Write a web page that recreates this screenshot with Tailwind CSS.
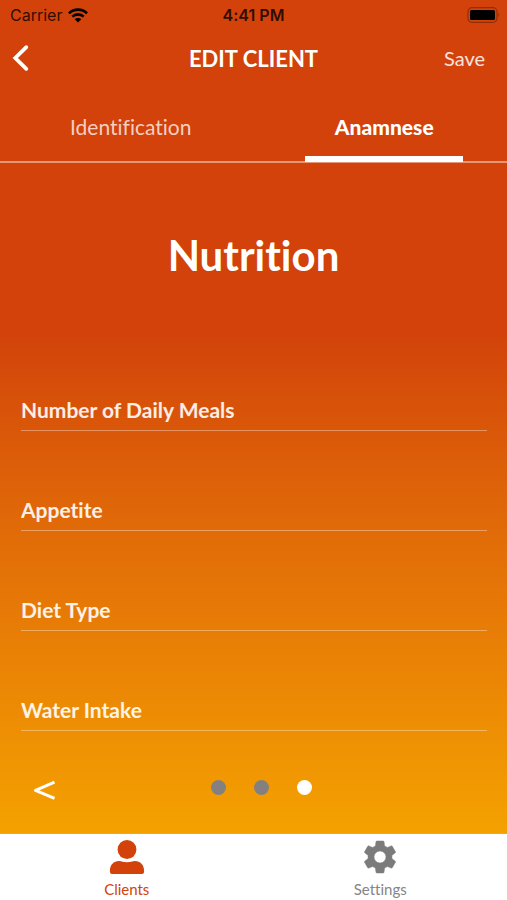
<!DOCTYPE html>
<html lang="en">
<head>
    <meta charset="UTF-8">
    <meta name="viewport" content="width=device-width, initial-scale=1.0">
    <title>Edit Client</title>
    <script src="https://cdn.jsdelivr.net/npm/@tailwindcss/browser@4"></script>
</head>
<body class="min-h-screen flex flex-col font-['Lato',sans-serif] [font-variant-ligatures:none] text-white bg-[#d2420a]">
    <!-- Status bar -->
    <div class="h-[30px] pl-[10px] pr-[6px] grid grid-cols-[1fr_auto_1fr] items-center font-['Inter',sans-serif] text-base text-black/80">
        <div class="flex items-center gap-[6px]">
            <span>Carrier</span>
            <svg class="w-5 h-[15px]" viewBox="0 0 20 15" fill="none" stroke="#000" stroke-width="2.6">
                <path d="M1 5.3a12.8 12.8 0 0 1 18 0"/>
                <path d="M4.3 8.7a8.1 8.1 0 0 1 11.4 0"/>
                <path d="M10 14.6l-3.3-3.3a4.7 4.7 0 0 1 6.6 0z" fill="#000" stroke="none"/>
            </svg>
        </div>
        <span class="pr-1 font-semibold">4:41 PM</span>
        <svg class="w-[34px] h-4 justify-self-end" viewBox="0 0 34 16">
            <rect x="1" y=".7" width="29" height="14.6" rx="4" fill="none" stroke="#000" stroke-opacity=".3" stroke-width="1.2"/>
            <rect x="3" y="3" width="25" height="10" rx="1.5" fill="#000"/>
            <path d="M31.5 5.8q1.7 2.2 0 4.4z" fill="#000" fill-opacity=".35"/>
        </svg>
    </div>

    <!-- Header -->
    <header class="h-14 px-3 grid grid-cols-[1fr_auto_1fr] items-center">
        <button type="button" aria-label="Back" class="justify-self-start">
            <svg class="w-[18px] h-7" viewBox="0 0 18 28" fill="none" stroke="#fff" stroke-width="3.8" stroke-linecap="round" stroke-linejoin="miter">
                <path d="M14.3 3.2L3.3 14l11 10.8"/>
            </svg>
        </button>
        <h1 class="text-[22px] font-bold">EDIT CLIENT</h1>
        <button type="button" class="justify-self-end pr-[10px] text-xl text-white/85">Save</button>
    </header>

    <!-- Tabs -->
    <nav class="h-[77px] pl-2 grid grid-cols-2 gap-2 border-b-2 border-white/45 text-[21px]">
        <button type="button" class="-mb-px flex flex-col items-center text-white/75">
            <span class="flex-1 flex items-center pt-3">Identification</span>
            <span class="w-[158px] h-[6px]"></span>
        </button>
        <button type="button" class="-mb-px flex flex-col items-center">
            <span class="flex-1 flex items-center pt-3 font-black">Anamnese</span>
            <span class="w-[158px] h-[6px] bg-white"></span>
        </button>
    </nav>

    <main class="flex-1 flex flex-col bg-linear-to-b from-[#d2420a] from-25% to-[#f4a100]">
        <h2 class="pt-[66px] text-center text-[42px] leading-[52px] font-bold">Nutrition</h2>

        <form class="mt-[109px] pl-[21px] pr-5 flex flex-col gap-[59px] text-[21px] font-bold">
            <input type="text" aria-label="Number of Daily Meals" placeholder="Number of Daily Meals" class="h-[41px] pb-[2px] border-b border-white/35 placeholder:text-white/90 outline-none">
            <input type="text" aria-label="Appetite" placeholder="Appetite" class="h-[41px] pb-[2px] border-b border-white/35 placeholder:text-white/90 outline-none">
            <input type="text" aria-label="Diet Type" placeholder="Diet Type" class="h-[41px] pb-[2px] border-b border-white/35 placeholder:text-white/90 outline-none">
            <input type="text" aria-label="Water Intake" placeholder="Water Intake" class="h-[41px] pb-[2px] border-b border-white/35 placeholder:text-white/90 outline-none">
        </form>

        <!-- Pager -->
        <div class="flex-1 px-8 pb-[15px] grid grid-cols-3 items-end">
            <button type="button" aria-label="Previous" class="h-14 justify-self-start">
                <svg class="w-6 h-6" viewBox="0 0 24 24" fill="none" stroke="#fff" stroke-width="3" stroke-linejoin="round">
                    <path d="M22.5 4.2L3.5 12.3l19 8"/>
                </svg>
            </button>
            <div class="h-[38px] flex justify-center gap-7 pl-4">
                <span class="size-[15px] shrink-0 rounded-full bg-[#858080]"></span>
                <span class="size-[15px] shrink-0 rounded-full bg-[#858080]"></span>
                <span class="size-[15px] shrink-0 rounded-full bg-white"></span>
            </div>
        </div>
    </main>

    <!-- Bottom tabs -->
    <footer class="h-[67px] pt-[5px] grid grid-cols-2 border-t border-[#d9a760] bg-white text-[15px] leading-5 text-[#858585]">
        <a href="#" class="flex flex-col items-center gap-1 text-[#d2420a]">
            <svg class="w-9 h-9" viewBox="0 0 36 36" fill="currentColor">
                <circle cx="18" cy="10.5" r="9.4"/>
                <path d="M.9 32C.9 25.800 4.800 22 10 22c2.700 0 4.500 1.300 8 1.300s5.300-1.300 8-1.300c5.200 0 9.100 3.800 9.100 10v.8q0 2.200-2.200 2.200H3.100Q.9 35 .9 32.800z"/>
            </svg>
            <span>Clients</span>
        </a>
        <a href="#" class="flex flex-col items-center gap-1">
            <svg class="w-9 h-9" viewBox="1.2 1.2 21.6 21.6" fill="#7b7b7b" stroke="#7b7b7b" stroke-width=".3" stroke-linejoin="round">
                <path d="M19.14 12.94c.04-.3.06-.61.06-.94s-.02-.64-.07-.94l2.03-1.58c.18-.14.23-.41.12-.61l-1.92-3.32c-.12-.22-.37-.29-.59-.22l-2.39.96c-.5-.38-1.03-.7-1.62-.94l-.36-2.54c-.04-.24-.24-.41-.48-.41h-3.84c-.24 0-.43.17-.47.41l-.36 2.54c-.59.24-1.13.57-1.62.94l-2.39-.96c-.22-.08-.47 0-.59.22L2.74 8.87c-.12.21-.08.47.12.61l2.03 1.58c-.05.3-.09.63-.09.94s.02.64.07.94l-2.03 1.58c-.18.14-.23.41-.12.61l1.92 3.32c.12.22.37.29.59.22l2.39-.96c.5.38 1.03.7 1.62.94l.36 2.54c.05.24.24.41.48.41h3.84c.24 0 .44-.17.47-.41l.36-2.54c.59-.24 1.13-.56 1.62-.94l2.39.96c.22.08.47 0 .59-.22l1.92-3.32c.12-.22.07-.47-.12-.61zM12 15.6a3.6 3.6 0 1 1 0-7.2 3.6 3.6 0 0 1 0 7.2z"/>
            </svg>
            <span>Settings</span>
        </a>
    </footer>
</body>
</html>
